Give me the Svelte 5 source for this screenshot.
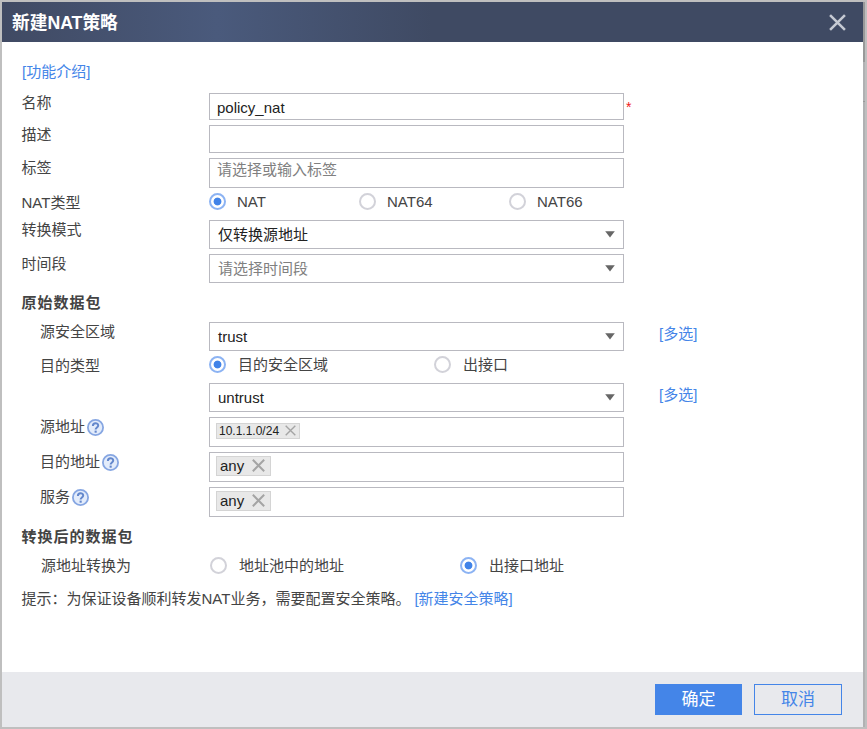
<script>
    let name = $state('policy_nat')
    let description = $state('')
    let natType = $state('NAT')
    let destType = $state('zone')
    let translateTo = $state('interface')

    const natTypes = [
        { value: 'NAT', label: 'NAT' },
        { value: 'NAT64', label: 'NAT64' },
        { value: 'NAT66', label: 'NAT66' }
    ]

    const destTypes = [
        { value: 'zone', label: '目的安全区域' },
        { value: 'interface', label: '出接口' }
    ]

    const translateTypes = [
        { value: 'pool', label: '地址池中的地址' },
        { value: 'interface', label: '出接口地址' }
    ]

    let matches = $state([
        { id: 'source', label: '源地址', tags: ['10.1.1.0/24'], small: true },
        { id: 'destination', label: '目的地址', tags: ['any'] },
        { id: 'service', label: '服务', tags: ['any'] }
    ])

    function removeTag(match, tag) {
        match.tags = match.tags.filter(t => t !== tag)
    }
</script>

{#snippet cross(size, width)}
    <svg width={size} height={size} viewBox="0 0 16 16">
        <path d="M1 1 L15 15 M15 1 L1 15" fill="none" stroke="currentColor" stroke-width={width} />
    </svg>
{/snippet}

{#snippet combo(text, empty)}
    <button class="box combo" class:empty>
        <span>{text}</span>
        <svg width="10" height="7" viewBox="0 0 10 7">
            <path d="M0.2 0.3 H9.8 L5 6.6 Z" fill="#666" />
        </svg>
    </button>
{/snippet}

{#snippet radio(option, checked, select)}
    <button class="radio" class:checked onclick={() => select(option.value)}>
        <span class="dot"></span>
        <span>{option.label}</span>
    </button>
{/snippet}

<div class="frame">
    <div class="dialog">
        <header>
            <h1>新建NAT策略</h1>
            <button class="close" aria-label="关闭">{@render cross(17, 2.4)}</button>
        </header>

        <main>
            <div class="intro"><a href="#intro">[功能介绍]</a></div>

            <div class="row">
                <label for="name">名称</label>
                <input id="name" class="box name" bind:value={name} />
                <span class="required">*</span>
            </div>
            <div class="row">
                <label for="description">描述</label>
                <input id="description" class="box description" bind:value={description} />
            </div>
            <div class="row">
                <label for="tag">标签</label>
                <input id="tag" class="box tag-input" placeholder="请选择或输入标签" />
            </div>
            <div class="row radios">
                <div class="label">NAT类型</div>
                {#each natTypes as option (option.value)}
                    {@render radio(option, natType === option.value, v => natType = v)}
                {/each}
            </div>
            <div class="row">
                <div class="label">转换模式</div>
                {@render combo('仅转换源地址', false)}
            </div>
            <div class="row">
                <div class="label">时间段</div>
                {@render combo('请选择时间段', true)}
            </div>

            <h2>原始数据包</h2>
            <div class="row">
                <div class="label sub">源安全区域</div>
                {@render combo('trust', false)}
                <a class="multi" href="#source-zone">[多选]</a>
            </div>
            <div class="row radios wide">
                <div class="label sub">目的类型</div>
                {#each destTypes as option (option.value)}
                    {@render radio(option, destType === option.value, v => destType = v)}
                {/each}
            </div>
            <div class="row">
                <div class="label"></div>
                {@render combo('untrust', false)}
                <a class="multi" href="#dest-zone">[多选]</a>
            </div>
            {#each matches as match (match.id)}
                <div class="row">
                    <div class="label sub help">
                        {match.label}
                        <svg width="17" height="17" viewBox="0 0 17 17">
                            <circle cx="8.5" cy="8.5" r="7.6" fill="#e3ecfb" stroke="#86a6e2" stroke-width="1.8" />
                            <path d="M5.9 6.9 C5.9 3.4 11.2 3.5 11.2 6.5 C11.2 8.5 8.6 8.4 8.6 10.6" fill="none" stroke="#6488cc" stroke-width="2" />
                            <rect x="7.6" y="11.6" width="2.1" height="2.1" fill="#6488cc" />
                        </svg>
                    </div>
                    <div class="box tags">
                        {#each match.tags as tag}
                            <span class="chip" class:small={match.small}>
                                {tag}
                                <button aria-label="删除" onclick={() => removeTag(match, tag)}>
                                    {@render cross(match.small ? 11 : 13, match.small ? 2 : 2.4)}
                                </button>
                            </span>
                        {/each}
                    </div>
                </div>
            {/each}

            <h2 class="after">转换后的数据包</h2>
            <div class="row radios translate">
                <div class="label sub">源地址转换为</div>
                {#each translateTypes as option (option.value)}
                    {@render radio(option, translateTo === option.value, v => translateTo = v)}
                {/each}
            </div>
            <p>提示：为保证设备顺利转发NAT业务，需要配置安全策略。<a href="#policy">[新建安全策略]</a></p>
        </main>

        <footer>
            <button class="ok">确定</button>
            <button class="cancel">取消</button>
        </footer>
    </div>
    <div class="edge"></div>
</div>

<style>
    :global(body) {
        margin: 0;
    }

    .frame {
        box-sizing: border-box;
        width: 867px;
        height: 729px;
        display: flex;
        border: 2px solid #bfbfbf;
        background: #fff;
        color: #444;
        font: 15px/18px "Liberation Sans", Arial, "Noto Sans CJK SC", sans-serif;
    }

    .frame :is(button, input) {
        box-sizing: border-box;
        margin: 0;
        padding: 0;
        border: none;
        background: none;
        color: inherit;
        font: inherit;
        outline: none;
    }

    svg {
        display: block;
        flex: none;
    }

    .dialog {
        flex: 1;
        display: flex;
        flex-direction: column;
    }

    .edge {
        width: 2px;
        background: linear-gradient(#999 60px, #b1b1b3 60px 99px, #999 99px 100px, #b1b1b3 100px);
    }

    header {
        height: 40px;
        display: flex;
        align-items: center;
        justify-content: space-between;
        padding: 0 17px 0 10px;
        background: linear-gradient(90deg, #404a63, #4a5a7c 215px, #3f4a63 430px);
    }

    h1 {
        margin: 0;
        padding-top: 2px;
        color: #fff;
        font-size: 17.7px;
        line-height: 38px;
    }

    header .close {
        color: #c6cad3;
    }

    main {
        flex: 1;
        display: flex;
        flex-direction: column;
        gap: 5px;
        padding: 20px 0 0 20px;
    }

    a {
        color: #4485e8;
        text-decoration: none;
    }

    .intro {
        height: 25px;
        padding-top: 1px;
    }

    .row {
        display: flex;
        align-items: flex-start;
    }

    label,
    .label {
        box-sizing: border-box;
        width: 187px;
        flex: none;
        padding-top: 1px;
        text-indent: -0.5px;
    }

    .sub {
        padding-left: 19px;
        text-indent: -1px;
    }

    .frame .box {
        box-sizing: border-box;
        width: 415px;
        height: 30px;
        border: 1px solid #b9b9c0;
        background: #fff;
        color: #222;
    }

    .frame .name {
        height: 27px;
        padding: 2px 7px 0;
    }

    .frame .description {
        height: 28px;
        padding: 0 7px;
    }

    .frame .tag-input {
        padding: 0 7px 8px;
    }

    .tag-input::placeholder {
        color: #808080;
        opacity: 1;
    }

    .required {
        margin: 5px 0 0 2px;
        color: #f01818;
        font-size: 14px;
    }

    .frame .combo {
        height: 29px;
        display: flex;
        align-items: center;
        justify-content: space-between;
        padding: 0 8px;
    }

    .frame .empty {
        color: #808080;
    }

    .multi {
        margin: 3px 0 0 35px;
    }

    .radios {
        height: 22px;
    }

    .radio {
        width: 150px;
        display: flex;
        gap: 11px;
        text-align: left;
    }

    .wide .radio,
    .translate .radio {
        width: 225px;
        gap: 12px;
    }

    .translate .radio {
        width: 250px;
    }

    .translate .label {
        width: 188px;
        padding: 0 0 0 20px;
    }

    .dot {
        box-sizing: border-box;
        width: 17px;
        height: 17px;
        flex: none;
        border: 2px solid #d2d2d9;
        border-radius: 50%;
    }

    .checked .dot {
        border-color: #8cb3f3;
        background: radial-gradient(circle, #4183e8 3.5px, #fff 4.3px);
    }

    .help {
        display: flex;
        gap: 2px;
    }

    .help svg {
        margin-top: 1px;
    }

    .tags {
        display: flex;
        align-items: center;
        padding: 0 6px;
    }

    .chip {
        box-sizing: border-box;
        height: 20px;
        display: flex;
        align-items: center;
        gap: 8px;
        margin-bottom: 3px;
        padding: 0 5px 0 3px;
        border: 1px solid #d4d4d4;
        background: #e8e8e8;
    }

    .chip button {
        color: #a4a4a4;
    }

    .chip.small {
        height: 16px;
        gap: 6px;
        padding: 0 3px 0 2px;
        font-size: 12px;
        line-height: 14px;
    }

    h2 {
        height: 29px;
        margin: 0 0 0 -0.5px;
        font-size: 15px;
        line-height: 29px;
        letter-spacing: 1px;
    }

    h2.after {
        height: 30px;
    }

    p {
        margin: 0 0 0 -0.5px;
        line-height: 30px;
    }

    p a {
        margin-left: 4px;
    }

    footer {
        height: 55px;
        display: flex;
        align-items: center;
        justify-content: flex-end;
        gap: 12px;
        padding-right: 21px;
        background: #e8e9ed;
    }

    .frame footer button {
        width: 88px;
        height: 31px;
        border: 1px solid #4485e8;
        color: #4485e8;
        font-size: 17px;
    }

    .frame footer .ok {
        width: 87px;
        background: #4485e8;
        color: #fff;
    }
</style>
